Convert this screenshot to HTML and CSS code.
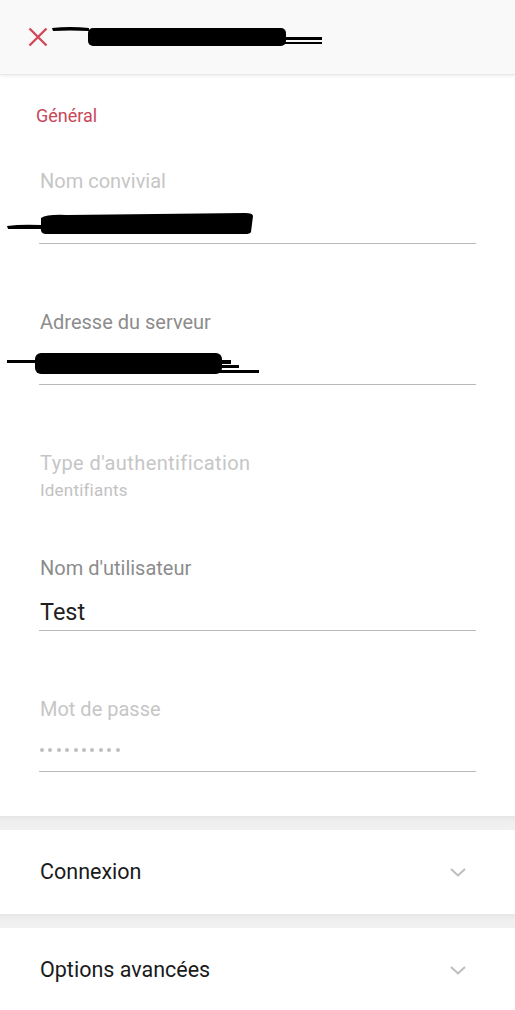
FILE: index.html
```html
<!DOCTYPE html>
<html lang="fr">
<head>
<meta charset="utf-8">
<title>Serveur</title>
<link rel="stylesheet" href="styles.css">
</head>
<body>
<div class="app">
  <header class="topbar">
    <svg class="close-icon" viewBox="0 0 20 20" width="20" height="20" aria-hidden="true">
      <path d="M1.5 1.5 L18.5 18.5 M18.5 1.5 L1.5 18.5" stroke="currentColor" stroke-width="2.4" stroke-linecap="butt" fill="none"/>
    </svg>
    <svg class="title-redact" viewBox="0 0 272 24" width="272" height="24" aria-hidden="true">
      <path d="M0 3 Q18 1 37 3 L37 6 Q18 5 1 6 Z" fill="#000"/>
      <rect x="36" y="3" width="198" height="18" rx="5" fill="#000"/>
      <rect x="232" y="12" width="38" height="3" fill="#000"/>
      <rect x="232" y="17" width="38" height="2" fill="#000"/>
    </svg>
  </header>

  <section class="card general">
    <h2 class="section-title">Général</h2>

    <div class="field">
      <div class="label disabled">Nom convivial</div>
      <div class="value">
        <svg class="redact redact-1" viewBox="0 0 250 24" width="250" height="24" aria-hidden="true">
          <path d="M0 14 Q14 12 34 13 L34 17 Q16 17 1 17 Z" fill="#000"/>
          <path d="M34 6 Q40 2 60 3 L238 1 Q246 1 246 4 L244 20 Q243 22 238 22 L38 22 Q33 21 34 16 Z" fill="#000"/>
        </svg>
      </div>
    </div>

    <div class="field">
      <div class="label">Adresse du serveur</div>
      <div class="value">
        <svg class="redact redact-2" viewBox="0 0 252 24" width="252" height="24" aria-hidden="true">
          <rect x="0" y="9" width="30" height="3" fill="#000"/>
          <rect x="28" y="2" width="187" height="21" rx="6" fill="#000"/>
          <rect x="212" y="9" width="12" height="4" fill="#000"/>
          <rect x="212" y="14" width="20" height="3" fill="#000"/>
          <rect x="212" y="19" width="40" height="3" fill="#000"/>
        </svg>
      </div>
    </div>

    <div class="field static">
      <div class="label disabled wide">Type d'authentification</div>
      <div class="sub">Identifiants</div>
    </div>

    <div class="field">
      <div class="label">Nom d'utilisateur</div>
      <div class="value text">Test</div>
    </div>

    <div class="field">
      <div class="label disabled">Mot de passe</div>
      <div class="value dots">
        <span></span><span></span><span></span><span></span><span></span>
        <span></span><span></span><span></span><span></span><span></span>
      </div>
    </div>
  </section>

  <div class="band"></div>

  <section class="card row">
    <span class="row-title">Connexion</span>
    <svg class="chevron" viewBox="0 0 16 9" width="16" height="9" aria-hidden="true">
      <path d="M1 1 L8 7.5 L15 1" stroke="currentColor" stroke-width="2" fill="none"/>
    </svg>
  </section>

  <div class="band"></div>

  <section class="card row">
    <span class="row-title">Options avancées</span>
    <svg class="chevron" viewBox="0 0 16 9" width="16" height="9" aria-hidden="true">
      <path d="M1 1 L8 7.5 L15 1" stroke="currentColor" stroke-width="2" fill="none"/>
    </svg>
  </section>
</div>
</body>
</html>
```

FILE: styles.css
```css
* { box-sizing: border-box; }

html, body {
  margin: 0;
  padding: 0;
  background: #ffffff;
}

body {
  font-family: Roboto, "Noto Sans", "Liberation Sans", sans-serif;
  color: #222;
}

.app {
  width: 515px;
  min-height: 1010px;
  overflow: hidden;
  background: #fff;
}

.topbar {
  height: 75px;
  background: #f9f9f9;
  display: flex;
  align-items: center;
  padding-left: 28px;
  gap: 4px;
  position: relative;
  z-index: 2;
  border-bottom: 1px solid #e8e8e8;
  box-shadow: 0 1px 3px rgba(0,0,0,0.08);
}

.close-icon {
  color: #d0495b;
  flex: none;
}

.title-redact {
  flex: none;
  margin-top: -1px;
}

.card {
  background: #fff;
}

.general {
  padding: 30px 39px 44px 39px;
}

.section-title {
  margin: 0 0 43px -3px;
  font-size: 18px;
  line-height: 22px;
  font-weight: 400;
  color: #c9475a;
}

.field {
  margin-bottom: 67px;
}

.field:last-child {
  margin-bottom: 0;
}

.field.static {
  margin-bottom: 57px;
}

.label {
  font-size: 20px;
  line-height: 22px;
  color: #8c8c8c;
  padding-left: 1px;
}

.label.disabled {
  color: #c6c6c6;
}

.label.wide {
  letter-spacing: 0.4px;
}

.sub {
  margin-top: 6px;
  font-size: 17px;
  line-height: 20px;
  color: #c2c2c2;
  padding-left: 1px;
  letter-spacing: 0.2px;
}

.value {
  position: relative;
  height: 52px;
  border-bottom: 1px solid #b9b9b9;
}

.value.text {
  padding: 18px 0 0 1px;
  font-size: 23.5px;
  line-height: 30px;
  color: #1f1f1f;
}

.redact {
  position: absolute;
  left: -32px;
}

.redact-1 {
  top: 20px;
}

.redact-2 {
  top: 18px;
}

.dots {
  display: flex;
  gap: 4.4px;
  align-items: flex-start;
  padding: 28px 0 0 1px;
  height: 52px;
}

.dots span {
  width: 4px;
  height: 4px;
  border-radius: 50%;
  background: #bfbfbf;
}

.band {
  height: 14px;
  background: linear-gradient(#e6e6e6, #efefef 40%, #f1f1f1);
}

.row {
  height: 84px;
  display: flex;
  align-items: center;
  justify-content: space-between;
  padding: 0 49px 0 40px;
}

.row-title {
  font-size: 21.5px;
  line-height: 26px;
  color: #1a1a1a;
}

.chevron {
  color: #bdbdbd;
  flex: none;
}
```
